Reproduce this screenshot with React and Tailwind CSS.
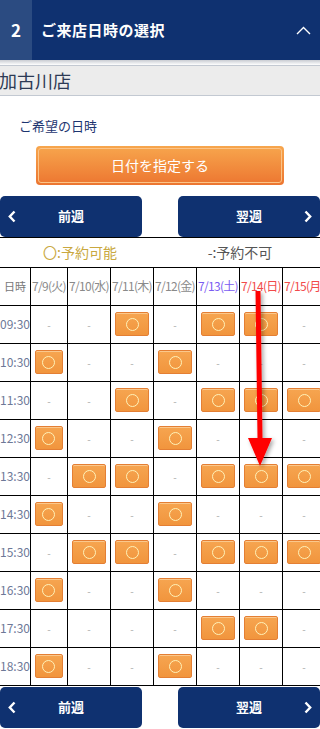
const FONT = { fontFamily: '"Noto Sans CJK JP", "Noto Sans", sans-serif' };

const dates = [
  { label: "7/9(火)", color: "text-[#8a8a8a]" },
  { label: "7/10(水)", color: "text-[#8a8a8a]" },
  { label: "7/11(木)", color: "text-[#8a8a8a]" },
  { label: "7/12(金)", color: "text-[#8a8a8a]" },
  { label: "7/13(土)", color: "text-[#7b5cf2]" },
  { label: "7/14(日)", color: "text-[#f24a4a]" },
  { label: "7/15(月)", color: "text-[#f24a4a]" },
];

const slots = [
  ["09:30", "--o-oo-"],
  ["10:30", "o--o---"],
  ["11:30", "--o-ooo"],
  ["12:30", "o--o---"],
  ["13:30", "-oo-ooo"],
  ["14:30", "o--o---"],
  ["15:30", "-oo-ooo"],
  ["16:30", "o--o---"],
  ["17:30", "----oo-"],
  ["18:30", "o--o---"],
];

function Slot() {
  return (
    <button className="flex h-[24px] w-[80%] items-center justify-center rounded-[2px] border border-[#e47f34] bg-gradient-to-b from-[#f6a550] to-[#f1953d] shadow-[inset_0_1px_0_#fbc88c]">
      <span className="block h-[13px] w-[13px] rounded-full border-[1.3px] border-[#fff2b8]" />
    </button>
  );
}

function WeekNav() {
  return (
    <div className="flex justify-between">
      <button className="relative flex h-[41px] w-[142px] items-center justify-center rounded-[5px] bg-[#0f3170] text-[13px] font-bold text-white">
        <svg className="absolute left-[8px] top-[14px]" width="8" height="13" viewBox="0 0 8 13">
          <polyline points="6.5,1.5 1.8,6.5 6.5,11.5" fill="none" stroke="white" strokeWidth="2.4" />
        </svg>
        前週
      </button>
      <button className="relative flex h-[41px] w-[142px] items-center justify-center rounded-[5px] bg-[#0f3170] text-[13px] font-bold text-white">
        翌週
        <svg className="absolute right-[8px] top-[14px]" width="8" height="13" viewBox="0 0 8 13">
          <polyline points="1.5,1.5 6.2,6.5 1.5,11.5" fill="none" stroke="white" strokeWidth="2.4" />
        </svg>
      </button>
    </div>
  );
}

export default function App() {
  return (
    <div className="relative w-[320px] overflow-hidden bg-white" style={FONT}>
      {/* section header */}
      <div className="flex h-[60px] items-center bg-[#0f3170] text-white">
        <div className="flex h-full w-[32px] items-center justify-center bg-[#2b4b81] text-[17px] font-bold">2</div>
        <div className="ml-[9px] flex-1 text-[15px] font-bold tracking-[0.5px]">ご来店日時の選択</div>
        <svg className="mr-[9px]" width="15" height="9" viewBox="0 0 15 9">
          <polyline points="1,8 7.5,1.5 14,8" fill="none" stroke="white" strokeWidth="1.4" />
        </svg>
      </div>
      <div className="h-[5px] bg-gradient-to-b from-[#c9ccd2] to-white" />

      {/* store */}
      <div className="-ml-[1px] flex h-[31px] items-center border-t border-b border-[#c3c9d2] bg-[#ececec] text-[18px] text-[#2c3a55]">
        加古川店
      </div>

      <div className="pl-[19px] pt-[20px] text-[13px] text-[#1d3570]">ご希望の日時</div>

      <div className="mt-[10px] flex justify-center">
        <button className="flex h-[39px] w-[248px] items-center justify-center rounded-[4px] bg-gradient-to-b from-[#f7a64d] to-[#ec7530] p-[2px] text-[14px] text-white">
          <span className="flex h-full w-full items-center justify-center rounded-[3px] border border-[#fbc488]">日付を指定する</span>
        </button>
      </div>

      <div className="mt-[11px] border-b border-black">
        <WeekNav />
      </div>

      {/* legend */}
      <div className="grid h-[29px] grid-cols-2 items-center text-center text-[14px]">
        <span className="text-[#c9a840]">〇:予約可能</span>
        <span className="text-[#555]">-:予約不可</span>
      </div>

      {/* schedule table */}
      <div className="grid w-[326px] grid-cols-[31px_37px_43px_43px_43px_43px_43px_43px] border-t border-black">
        <div className="flex h-[38px] items-center justify-center border-r border-b border-black text-[11px] text-[#777]">日時</div>
        {dates.map((d) => (
          <div key={d.label} className={`flex h-[38px] items-center justify-center overflow-hidden whitespace-nowrap border-r border-b border-black text-[12px] tracking-[-0.7px] ${d.color}`}>
            {d.label}
          </div>
        ))}
        {slots.map(([time, marks]) => (
          <>
            <div key={time} className="flex h-[38px] items-center justify-center border-r border-b border-black text-[12px] text-[#6d7897]">{time}</div>
            {marks.split("").map((m, i) => (
              <div key={time + i} className="flex h-[38px] items-center justify-center border-r border-b border-black">
                {m === "o" ? <Slot /> : <span className="text-[10px] text-[#aaa]">-</span>}
              </div>
            ))}
          </>
        ))}
      </div>

      <div className="mt-[1px] pb-[3px]">
        <WeekNav />
      </div>

      {/* annotation arrow */}
      <svg className="pointer-events-none absolute left-[240px] top-[285px]" width="40" height="190" viewBox="0 0 40 190">
        <defs>
          <filter id="sh" x="-50%" y="-10%" width="200%" height="120%">
            <feDropShadow dx="2" dy="2" stdDeviation="2" floodColor="#000" floodOpacity="0.35" />
          </filter>
        </defs>
        <polygon points="15.5,6 20.5,6 22.5,153 32,153 20,181 8,153 17.5,153" fill="#ff0000" filter="url(#sh)" />
      </svg>
    </div>
  );
}
